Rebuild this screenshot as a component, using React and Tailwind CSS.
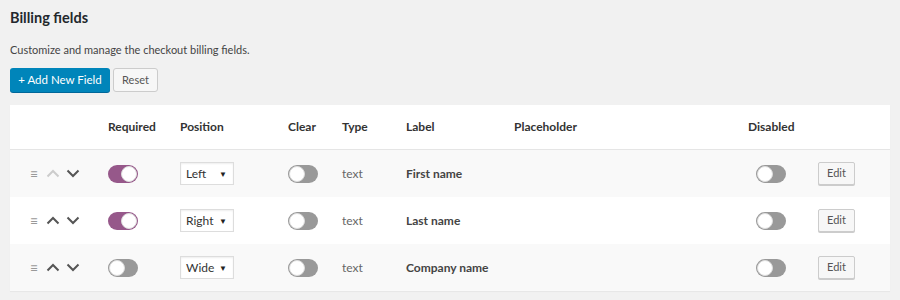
import { useState } from "react";

const font = { fontFamily: 'Lato, "Noto Sans", sans-serif' };

function Toggle({ on }) {
  return (
    <span
      className={`relative inline-flex h-[18px] w-[30px] items-center rounded-full ${
        on ? "bg-[#96588a]" : "bg-[#999]"
      }`}
    >
      <span
        className={`absolute top-[1px] h-4 w-4 rounded-full border border-[#ddd] bg-white ${
          on ? "left-[13px]" : "left-[1px]"
        }`}
      />
    </span>
  );
}

function Chevron({ up, faded }) {
  return (
    <svg width="14" height="9" viewBox="0 0 14 9" className={faded ? "text-[#ccc]" : "text-[#555]"}>
      <path
        d={up ? "M1.5 7.5 L7 2 L12.5 7.5" : "M1.5 1.5 L7 7 L12.5 1.5"}
        fill="none"
        stroke="currentColor"
        strokeWidth="2"
      />
    </svg>
  );
}

const cols = "grid grid-cols-[98px_72px_108px_54px_64px_108px_234px_46px_24px_1fr] items-center";

const rows = [
  { req: true, pos: "Left", label: "First name", first: true },
  { req: true, pos: "Right", label: "Last name" },
  { req: false, pos: "Wide", label: "Company name" },
];

export default function App() {
  const [data] = useState(rows);
  return (
    <div className="h-[300px] w-[900px] overflow-hidden bg-[#f1f1f1] text-[#444]" style={font}>
      <div className="px-[10px] pt-[7px]">
        <h1 className="text-[14.5px] font-bold leading-[22px] text-[#23282d]">Billing fields</h1>
        <p className="mt-[11px] text-[11px] leading-[20px] text-[#444]">
          Customize and manage the checkout billing fields.
        </p>
        <div className="mt-[8px] flex gap-[3px]">
          <button className="h-[24px] w-[100px] rounded-[3px] bg-[#0085ba] text-[11.5px] text-white shadow-[0_1px_0_#006799]">
            + Add New Field
          </button>
          <button className="h-[24px] w-[45px] rounded-[3px] border border-[#ccc] bg-[#f7f7f7] text-[11px] text-[#555]">
            Reset
          </button>
        </div>
      </div>
      <div className="mx-[10px] mt-[13px] bg-white shadow-[0_1px_1px_rgba(0,0,0,0.04)]">
        <div className={`${cols} h-[45px] border-b border-[#e5e5e5] text-[12px] font-bold text-[#333]`}>
          <span />
          <span>Required</span>
          <span>Position</span>
          <span>Clear</span>
          <span>Type</span>
          <span>Label</span>
          <span>Placeholder</span>
          <span className="whitespace-nowrap">Disabled</span>
          <span />
          <span />
        </div>
        {data.map((r, i) => (
          <div
            key={r.label}
            className={`${cols} h-[47px] text-[12px] ${i % 2 === 0 ? "bg-[#f9f9f9]" : "bg-white"}`}
          >
            <span className="flex items-center gap-[6px] pl-[18px]">
              <span className="w-[12px] text-center text-[14px] leading-none text-[#999]">≡</span>
              <Chevron up faded={r.first} />
              <Chevron />
            </span>
            <span className="flex">
              <Toggle on={r.req} />
            </span>
            <span className="flex">
              <span className="flex h-[23px] w-[54px] items-center justify-between border border-[#ddd] bg-white pl-[5px] pr-[6px] text-[12px] text-[#333] shadow-[inset_0_1px_2px_rgba(0,0,0,0.07)]">
                {r.pos}
                <span className="text-[8px] text-[#222]">▼</span>
              </span>
            </span>
            <span className="flex">
              <Toggle />
            </span>
            <span className="text-[#666]">text</span>
            <span className="whitespace-nowrap font-bold text-[#444]">{r.label}</span>
            <span />
            <span className="flex justify-center">
              <Toggle />
            </span>
            <span />
            <span className="flex">
              <button className="h-[23px] w-[37px] rounded-[2px] border border-[#ccc] bg-[#f7f7f7] text-[11px] text-[#555] shadow-[0_1px_0_#ccc]">
                Edit
              </button>
            </span>
          </div>
        ))}
      </div>
    </div>
  );
}
